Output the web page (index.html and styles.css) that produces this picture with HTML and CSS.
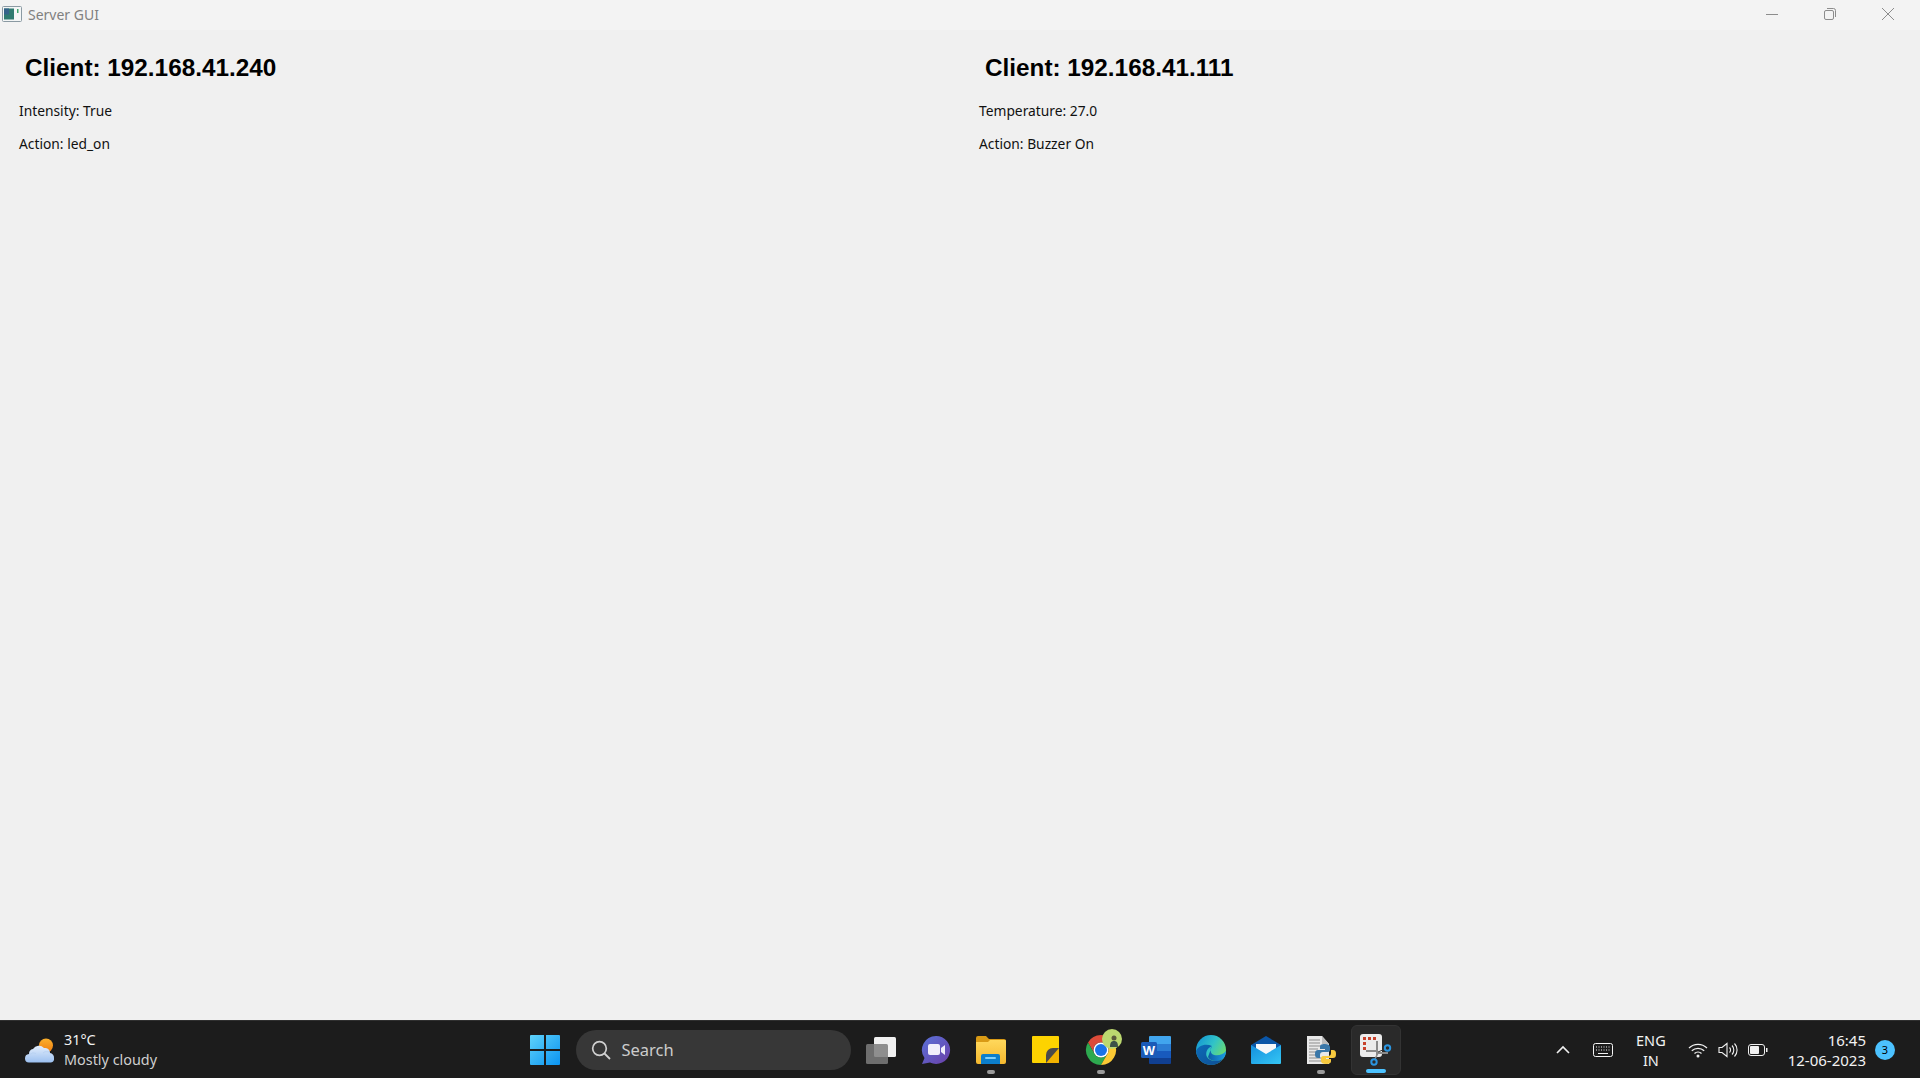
FILE: index.html
```html
<!DOCTYPE html>
<html lang="en">
<head>
    <meta charset="UTF-8">
    <title>Server GUI</title>
    <link rel="stylesheet" href="styles.css">
</head>
<body>

<div class="window">
    <!-- Title bar -->
    <header class="titlebar">
        <svg class="app-icon" width="20" height="16" viewBox="0 0 20 16">
            <rect x="0.5" y="0.5" width="19" height="15" rx="1" fill="#f4f6f6" stroke="#8b9aa3"/>
            <rect x="2" y="2.5" width="10" height="11" fill="#2f7a70"/>
            <rect x="2" y="2.5" width="5" height="6" fill="#35638a"/>
            <rect x="15" y="3" width="1.5" height="4" fill="#3fa56f"/>
        </svg>
        <span class="title">Server GUI</span>
        <div class="window-controls">
            <svg width="14" height="14" viewBox="0 0 14 14"><path d="M1 7.5h12" stroke="#8c8c8c" fill="none"/></svg>
            <svg width="14" height="14" viewBox="0 0 14 14"><rect x="1.5" y="3.5" width="9" height="9" rx="1.5" fill="none" stroke="#8c8c8c"/><path d="M4 1.5h6.5a2 2 0 0 1 2 2V10" fill="none" stroke="#8c8c8c"/></svg>
            <svg width="14" height="14" viewBox="0 0 14 14"><path d="M1 1l12 12M13 1L1 13" stroke="#8c8c8c" fill="none"/></svg>
        </div>
    </header>

    <!-- Client panels -->
    <main class="clients">
        <section class="client">
            <h1>Client: 192.168.41.240</h1>
            <p>Intensity: True</p>
            <p>Action: led_on</p>
        </section>
        <section class="client">
            <h1>Client: 192.168.41.111</h1>
            <p>Temperature: 27.0</p>
            <p>Action: Buzzer On</p>
        </section>
    </main>

    <!-- Taskbar -->
    <footer class="taskbar">
        <div class="weather">
            <svg width="32" height="28" viewBox="0 0 32 28">
                <defs>
                    <linearGradient id="sun" x1="0" y1="0" x2="0" y2="1"><stop offset="0" stop-color="#fbb02c"/><stop offset="1" stop-color="#ef7d10"/></linearGradient>
                    <linearGradient id="cloud" x1="0" y1="0" x2="0" y2="1"><stop offset="0" stop-color="#e3eefc"/><stop offset="1" stop-color="#9cc0f0"/></linearGradient>
                </defs>
                <circle cx="22" cy="9.500" r="7" fill="url(#sun)"/>
                <path d="M5 26.500a4 4 0 0 1-4-4a4.500 4.500 0 0 1 4-4.500a5 5 0 0 1 4-5a7 7 0 0 1 11-1a5 5 0 0 1 6 5a4.500 4.500 0 0 1 4 5a4 4 0 0 1-3 4.500z" fill="url(#cloud)"/>
                <path d="M6 18.500a5 5 0 0 1 6-1M19 17a5 5 0 0 1 7 0" fill="none" stroke="#b9d2f3"/>
            </svg>
            <div class="weather-text">
                <span class="temp">31°C</span>
                <span class="forecast">Mostly cloudy</span>
            </div>
        </div>

        <div class="apps">
            <div class="app">
                <svg width="30" height="30" viewBox="0 0 30 30">
                    <defs><linearGradient id="win" x1="0" y1="0" x2="1" y2="1"><stop offset="0" stop-color="#5fd3fb"/><stop offset="1" stop-color="#0a93f0"/></linearGradient></defs>
                    <path d="M1 0h13v14H0V1a1 1 0 0 1 1-1zM16 0h13a1 1 0 0 1 1 1v13H16zM0 16h14v14H1a1 1 0 0 1-1-1zM16 16h14v13a1 1 0 0 1-1 1H16z" fill="url(#win)"/>
                </svg>
            </div>
            <div class="search">
                <svg width="20" height="20" viewBox="0 0 20 20"><circle cx="8.500" cy="8.500" r="6.800" fill="none" stroke="#d0d0d0" stroke-width="1.700"/><path d="M13.500 13.500l5.500 5.500" stroke="#d0d0d0" stroke-width="1.800"/></svg>
                <span>Search</span>
            </div>
            <div class="app">
                <svg width="30" height="28" viewBox="0 0 30 28">
                    <rect x="8" y="1" width="22" height="20" rx="1.500" fill="#f0f0f0"/>
                    <rect x="0" y="8" width="22" height="20" rx="1.500" fill="#7d7d7d" fill-opacity="0.85"/>
                </svg>
            </div>
            <div class="app">
                <svg width="30" height="30" viewBox="0 0 30 30">
                    <defs><linearGradient id="chat" x1="0" y1="0" x2="1" y2="1"><stop offset="0" stop-color="#5a72d8"/><stop offset="1" stop-color="#6b3fa8"/></linearGradient></defs>
                    <path d="M15 1a14 14 0 1 1-6 26.600L1 29l2.500-6A14 14 0 0 1 15 1z" fill="url(#chat)"/>
                    <rect x="7" y="9" width="12" height="11" rx="2" fill="#f0eefb"/>
                    <path d="M20 13l4-3v10l-4-3z" fill="#f0eefb"/>
                </svg>
            </div>
            <div class="app running">
                <svg width="30" height="28" viewBox="0 0 30 28">
                    <defs><linearGradient id="folder" x1="0" y1="0" x2="0" y2="1"><stop offset="0" stop-color="#ffd85c"/><stop offset="1" stop-color="#f5b82e"/></linearGradient></defs>
                    <path d="M0 2a2 2 0 0 1 2-2h8l3 3h15a2 2 0 0 1 2 2v4H0z" fill="#d99a15"/>
                    <path d="M0 6h12l2-2h15a1 1 0 0 1 1 1v21a2 2 0 0 1-2 2H2a2 2 0 0 1-2-2z" fill="url(#folder)"/>
                    <path d="M5 28v-8a2 2 0 0 1 2-2h15a2 2 0 0 1 2 2v8z" fill="#0c7ecb"/>
                    <rect x="9" y="21" width="11" height="2" rx="1" fill="#7fd0fb"/>
                </svg>
            </div>
            <div class="app">
                <svg width="27" height="27" viewBox="0 0 27 27">
                    <path d="M1 0h25a1 1 0 0 1 1 1v25a1 1 0 0 1-1 1H1a1 1 0 0 1-1-1V1a1 1 0 0 1 1-1z" fill="#fdd300"/>
                    <path d="M27 21v5a1 1 0 0 1-1 1H14z" fill="#f2b200"/>
                    <path d="M27 12v9l-7 6h-6V19a7 7 0 0 1 7-7z" fill="#f2b200"/>
                    <path d="M27 12L14 27v-8a7 7 0 0 1 7-7z" fill="#4a4a4a"/>
                </svg>
            </div>
            <div class="app running">
                <div class="chrome">
                    <svg width="32" height="32" viewBox="0 0 32 32">
                        <path d="M16 1A15 15 0 0 0 3 8.500L9.500 19.750A7.500 7.500 0 0 1 16 8.500H29A15 15 0 0 0 16 1z" fill="#dd4b39"/>
                        <path d="M3 8.500A15 15 0 0 0 16 31L22.500 19.750A7.500 7.500 0 0 1 9.500 19.750z" fill="#2da94f"/>
                        <path d="M29 8.500H16A7.500 7.500 0 0 1 22.500 19.750L16 31A15 15 0 0 0 29 8.500z" fill="#fcc934"/>
                        <circle cx="16" cy="16" r="7.500" fill="#fff"/>
                        <circle cx="16" cy="16" r="6" fill="#1a73e8"/>
                    </svg>
                    <svg class="avatar" width="20" height="20" viewBox="0 0 20 20">
                        <circle cx="10" cy="10" r="10" fill="#bcd86f"/>
                        <circle cx="12" cy="9" r="2.500" fill="#5b5a3c"/>
                        <path d="M8 18c0-4 1-6 4-6s4 2 4 6z" fill="#3c5148"/>
                    </svg>
                </div>
            </div>
            <div class="app">
                <svg width="30" height="28" viewBox="0 0 30 28">
                    <path d="M8 1a1 1 0 0 1 1-1h20a1 1 0 0 1 1 1v7H8z" fill="#41a5ee"/>
                    <rect x="8" y="8" width="22" height="7" fill="#2b7cd3"/>
                    <rect x="8" y="15" width="22" height="7" fill="#185abd"/>
                    <path d="M8 22h22v5a1 1 0 0 1-1 1H9a1 1 0 0 1-1-1z" fill="#103f91"/>
                    <rect x="0" y="6" width="16" height="16" rx="1.500" fill="#1a5bb8"/>
                    <text x="8" y="19" class="word-letter" text-anchor="middle">W</text>
                </svg>
            </div>
            <div class="app">
                <svg width="30" height="30" viewBox="0 0 30 30">
                    <defs>
                        <linearGradient id="edge" x1="0" y1="0" x2="1" y2="0.600"><stop offset="0" stop-color="#0f8fd6"/><stop offset="0.550" stop-color="#31c3c8"/><stop offset="1" stop-color="#6fdc6a"/></linearGradient>
                        <linearGradient id="edge2" x1="0" y1="0" x2="1" y2="1"><stop offset="0" stop-color="#0c6bb8"/><stop offset="1" stop-color="#0f4f94"/></linearGradient>
                        <linearGradient id="edge3" x1="0" y1="0" x2="1" y2="0"><stop offset="0" stop-color="#0d5aa6"/><stop offset="1" stop-color="#1b9de2"/></linearGradient>
                    </defs>
                    <circle cx="15" cy="15" r="15" fill="url(#edge)"/>
                    <path d="M12 22C14 27 23 27 27 24C29 22 30 19 30 16C26 21 19 21 16 19C14 17 14 13 16 11z" fill="url(#edge3)"/>
                    <path d="M0 16C1 25 8 30 15 30C20 30 24 28 27 24C22 27 14 27 11 22C9 18 11 13 16 11C9 8 2 11 0 16z" fill="url(#edge2)"/>
                </svg>
            </div>
            <div class="app">
                <svg width="30" height="28" viewBox="0 0 30 28">
                    <defs><linearGradient id="mail" x1="0" y1="0" x2="1" y2="1"><stop offset="0" stop-color="#1490df"/><stop offset="1" stop-color="#35c6f4"/></linearGradient></defs>
                    <path d="M15 0L30 9v3H0V9z" fill="#0a56a8"/>
                    <path d="M5 8h20v10H5z" fill="#f4f7fa"/>
                    <path d="M0 9l15 9 15-9v18a1 1 0 0 1-1 1H1a1 1 0 0 1-1-1z" fill="url(#mail)"/>
                </svg>
            </div>
            <div class="app running">
                <svg width="30" height="30" viewBox="0 0 30 30">
                    <path d="M1 1h15l7 8v20H1z" fill="#e8e8e8"/>
                    <path d="M16 1l7 8h-7z" fill="#bdbdbd"/>
                    <path d="M3 5h11M3 8h11M3 11h17M3 14h9M3 17h9M3 20h9M3 23h12M3 26h17" stroke="#8d8d8d" fill="none"/>
                    <path d="M19 9c-4 0-5 1-5 3v2h5v1h-7c-2 0-3 1-3 4s1 4 3 4h2v-3c0-2 1-3 3-3h5c1 0 2-1 2-2v-3c0-2-2-3-5-3z" fill="#3a77a8"/>
                    <path d="M20 29c4 0 5-1 5-3v-2h-5v-1h7c2 0 3-1 3-4s-1-4-3-4h-2v3c0 2-1 3-3 3h-5c-1 0-2 1-2 2v3c0 2 2 3 5 3z" fill="#f7c93e"/>
                </svg>
            </div>
            <div class="app active">
                <svg width="32" height="32" viewBox="0 0 32 32">
                    <rect x="0" y="0" width="22" height="23" rx="3" fill="#ececec"/>
                    <path d="M3 3h3v3H3zM8 3h3v3H8zM13 3h3v3h-3zM3 8h3v3H3zM3 13h3v3H3z" fill="#c8422c"/>
                    <path d="M16 7h2v11h10v2h-10v1h-2v-3H6v-2h10z" fill="#8b8b8b"/>
                    <path d="M18 18l7-3" stroke="#3a3a3a" fill="none"/>
                    <circle cx="27.500" cy="14" r="2.700" fill="none" stroke="#2b95e0" stroke-width="2"/>
                    <path d="M18 19l-3 6" stroke="#8b8b8b" stroke-width="1.500"/>
                    <circle cx="14" cy="28" r="2.700" fill="none" stroke="#2b95e0" stroke-width="2"/>
                </svg>
            </div>
        </div>

        <div class="tray">
            <svg class="chevron" width="14" height="14" viewBox="0 0 14 14"><path d="M1 10l6-6 6 6" fill="none" stroke="#f0f0f0" stroke-width="1.600"/></svg>
            <svg class="keyboard" width="20" height="14" viewBox="0 0 20 14">
                <rect x="0.500" y="0.500" width="19" height="13" rx="2" fill="none" stroke="#f4f4f4"/>
                <path d="M3 4h1M5.500 4h1M8 4h1M10.500 4h1M13 4h1M15.500 4h1M3 7h1M5.500 7h1M8 7h1M10.500 7h1M13 7h1M15.500 7h1M5 10.500h10" stroke="#f4f4f4" fill="none"/>
            </svg>
            <div class="lang"><span>ENG</span><span>IN</span></div>
            <svg class="wifi" width="20" height="16" viewBox="0 0 20 16">
                <path d="M1 6a13 13 0 0 1 18 0M3.800 8.800a9 9 0 0 1 12.400 0M6.500 11.500a5 5 0 0 1 7 0" fill="none" stroke="#f0f0f0" stroke-width="1.300"/>
                <circle cx="10" cy="14" r="1.500" fill="#f0f0f0"/>
            </svg>
            <svg class="volume" width="20" height="16" viewBox="0 0 20 16">
                <path d="M1 5.500h3L9 1.500v13l-5-4H1z" fill="none" stroke="#f0f0f0" stroke-width="1.100"/>
                <path d="M11.500 5.500a3.500 3.500 0 0 1 0 5M14 3.500a6.500 6.500 0 0 1 0 9M16.500 1.500a9.500 9.500 0 0 1 0 13" fill="none" stroke="#f0f0f0" stroke-width="1.100"/>
            </svg>
            <svg class="battery" width="20" height="12" viewBox="0 0 20 12">
                <rect x="0.500" y="0.500" width="16" height="11" rx="2.500" fill="none" stroke="#f0f0f0"/>
                <rect x="2" y="2" width="9" height="8" rx="1" fill="#f0f0f0"/>
                <path d="M18 4h1.500v4H18z" fill="#f0f0f0"/>
            </svg>
            <div class="clock"><span>16:45</span><span>12-06-2023</span></div>
            <span class="badge">3</span>
        </div>
    </footer>
</div>

</body>
</html>
```

FILE: styles.css
```css
* {
    margin: 0;
    padding: 0;
    box-sizing: border-box;
}

body {
    font-family: "Noto Sans", "Open Sans", sans-serif;
    background-color: #f0f0f0;
    overflow: hidden;
}

.window {
    display: flex;
    flex-direction: column;
    height: 1078px;
}

/* title bar */
.titlebar {
    display: flex;
    align-items: center;
    height: 30px;
    padding: 0 0 2px 2px;
    background-color: #f3f3f3;
}

.app-icon {
    margin-right: 6px;
}

.title {
    font-size: 14px;
    color: #808080;
}

.window-controls {
    display: flex;
    gap: 44px;
    margin-left: auto;
    padding-right: 25px;
}

/* clients */
.clients {
    flex: 1;
    display: grid;
    grid-template-columns: 1fr 1fr;
    background-color: #f0f0f0;
}

.client {
    padding: 23px 0 0 19px;
}

.client h1 {
    font-family: "Liberation Sans", Arial, sans-serif;
    font-size: 24.3px;
    font-weight: bold;
    line-height: 30px;
    margin: 0 0 18px 6px;
    color: #000;
}

.client p {
    font-size: 13.8px;
    line-height: 20px;
    margin-bottom: 12.500px;
    color: #111;
}

/* taskbar */
.taskbar {
    display: grid;
    grid-template-columns: 1fr auto 1fr;
    align-items: center;
    height: 58px;
    background-color: #1c1c1c;
    border-top: 1px solid #2f2f2f;
    color: #f2f2f2;
}

.weather {
    display: flex;
    align-items: center;
    gap: 8px;
    padding-left: 24px;
}

.weather-text {
    display: flex;
    flex-direction: column;
    font-size: 14.400px;
    line-height: 20px;
}

.forecast {
    color: #cfcfcf;
}

.apps {
    display: flex;
    align-items: center;
    gap: 5px;
}

.app {
    position: relative;
    display: flex;
    align-items: center;
    justify-content: center;
    width: 50px;
    height: 50px;
    border-radius: 6px;
}

.app.running::after,
.app.active::after {
    content: "";
    position: absolute;
    left: 21px;
    bottom: 1px;
    width: 8px;
    height: 4px;
    border-radius: 2px;
    background-color: #9a9a9a;
}

.app.active {
    background-color: #2a2a2a;
    border: 1px solid #333;
}

.app.active::after {
    left: 14px;
    width: 20px;
    background-color: #4cc2ff;
}

.chrome {
    position: relative;
    width: 32px;
    height: 32px;
}

.avatar {
    position: absolute;
    top: -5px;
    right: -5px;
}

.word-letter {
    font-family: "Liberation Sans", Arial, sans-serif;
    font-size: 13px;
    font-weight: bold;
    fill: #fff;
}

.search {
    display: flex;
    align-items: center;
    gap: 11px;
    width: 275px;
    height: 40px;
    margin-left: 1px;
    padding-left: 15px;
    border-radius: 20px;
    background-color: #373737;
    font-size: 16.500px;
    color: #cccccc;
}

.tray {
    display: flex;
    align-items: center;
    justify-content: flex-end;
    padding-right: 25px;
}

.chevron {
    margin-right: 23px;
}

.keyboard {
    margin-right: 23px;
}

.lang {
    display: flex;
    flex-direction: column;
    align-items: center;
    margin-right: 22px;
    font-size: 14.500px;
    line-height: 20px;
}

.wifi {
    margin-right: 10px;
}

.volume {
    margin-right: 10px;
}

.battery {
    margin-right: 20px;
}

.clock {
    display: flex;
    flex-direction: column;
    align-items: flex-end;
    margin-right: 9px;
    font-size: 15px;
    line-height: 20px;
}

.badge {
    display: flex;
    align-items: center;
    justify-content: center;
    width: 20px;
    height: 20px;
    border-radius: 50%;
    background-color: #4cc2ff;
    font-size: 11px;
    color: #000;
}
```
